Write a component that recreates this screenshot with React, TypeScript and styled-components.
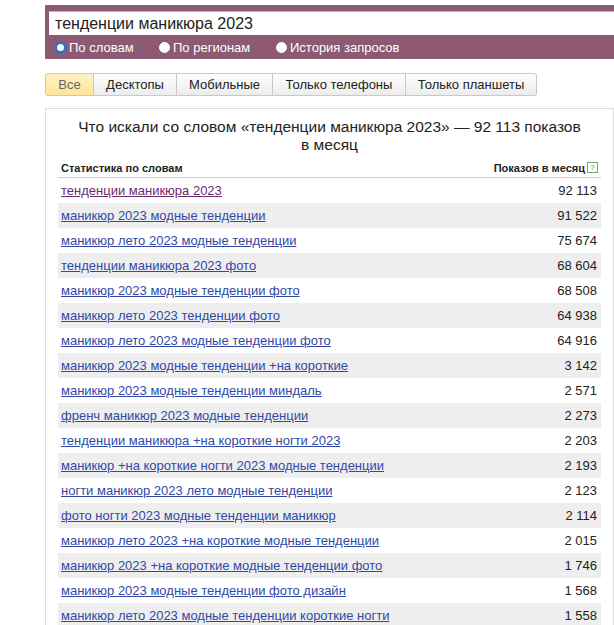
import React from "react";
import styled, { createGlobalStyle } from "styled-components";

const Global = createGlobalStyle`
  html, body { margin: 0; padding: 0; background: #fff; }
  body { font-family: "Liberation Sans", Arial, sans-serif; overflow: hidden; }
`;

const Page = styled.div`
  padding: 5px 0 0 45px;
  width: 569px;
`;

const SearchBox = styled.div`
  background: #8c5a72;
  padding: 6px 0 0 4px;
`;

const Input = styled.div`
  background: #fff;
  height: 24px;
  display: flex;
  align-items: center;
  padding-left: 6px;
  font-size: 16px;
  color: #222;
  border-top: 1px solid #c9a9b8;
  box-sizing: border-box;
`;

const RadioRow = styled.div`
  height: 24px;
  display: flex;
  align-items: center;
  padding-left: 6px;
`;

const RadioItem = styled.label<{ $w: number }>`
  display: flex;
  align-items: center;
  width: ${(p) => p.$w}px;
  color: #fff;
  font-size: 13px;
  gap: 3px;
`;

const RadioDot = styled.span<{ $on?: boolean }>`
  width: 11px;
  height: 11px;
  border-radius: 50%;
  box-sizing: border-box;
  background: #fff;
  border: ${(p) => (p.$on ? "2px solid #1a73e8" : "1px solid #fff")};
`;

const Tabs = styled.div`
  display: flex;
  margin-top: 14px;
  height: 23px;
`;

const Tab = styled.div<{ $active?: boolean; $w: number }>`
  width: ${(p) => p.$w}px;
  box-sizing: border-box;
  display: flex;
  align-items: center;
  justify-content: center;
  font-size: 13px;
  color: ${(p) => (p.$active ? "#666" : "#222")};
  border: 1px solid ${(p) => (p.$active ? "#d8c98c" : "#c8c8c8")};
  border-left-width: ${(p) => (p.$active ? 1 : 0)}px;
  background: ${(p) =>
    p.$active
      ? "linear-gradient(#fff3c6, #fbe39a)"
      : "linear-gradient(#ffffff, #ececec)"};
  border-radius: ${(p) => (p.$active ? "3px 0 0 3px" : "0")};
  &:last-child { border-radius: 0 3px 3px 0; }
`;

const Panel = styled.div`
  margin-top: 12px;
  border: 1px solid #dedede;
  border-bottom: none;
  padding: 9px 12px 0 12px;
  height: 600px;
`;

const Title = styled.div`
  text-align: center;
  font-size: 15.5px;
  line-height: 18px;
  color: #222;
  padding: 0 4px;
`;

const Table = styled.div`
  margin-top: 4px;
`;

const HeadRow = styled.div`
  display: flex;
  justify-content: space-between;
  align-items: center;
  height: 19px;
  padding: 0 3px 0 3px;
  border-bottom: 1px solid #d0d0d0;
  font-size: 11px;
  font-weight: bold;
  color: #222;
`;

const HeadRight = styled.span`
  display: flex;
  align-items: center;
  gap: 2px;
`;

const Help = styled.span`
  width: 9px;
  height: 9px;
  border: 1px solid #7aa36f;
  font-size: 8px;
  line-height: 9px;
  text-align: center;
  color: #777;
  font-weight: normal;
`;

const Row = styled.div<{ $alt: boolean }>`
  display: flex;
  justify-content: space-between;
  align-items: center;
  height: 25px;
  padding: 0 4px 0 3px;
  background: ${(p) => (p.$alt ? "#eeeeee" : "#fff")};
  font-size: 13px;
`;

const Link = styled.a<{ $visited?: boolean }>`
  color: ${(p) => (p.$visited ? "#6c2a6e" : "#3049a8")};
  text-decoration: underline;
`;

const Count = styled.span`
  color: #222;
`;

const rows: [string, string][] = [
  ["тенденции маникюра 2023", "92 113"],
  ["маникюр 2023 модные тенденции", "91 522"],
  ["маникюр лето 2023 модные тенденции", "75 674"],
  ["тенденции маникюра 2023 фото", "68 604"],
  ["маникюр 2023 модные тенденции фото", "68 508"],
  ["маникюр лето 2023 тенденции фото", "64 938"],
  ["маникюр лето 2023 модные тенденции фото", "64 916"],
  ["маникюр 2023 модные тенденции +на короткие", "3 142"],
  ["маникюр 2023 модные тенденции миндаль", "2 571"],
  ["френч маникюр 2023 модные тенденции", "2 273"],
  ["тенденции маникюра +на короткие ногти 2023", "2 203"],
  ["маникюр +на короткие ногти 2023 модные тенденции", "2 193"],
  ["ногти маникюр 2023 лето модные тенденции", "2 123"],
  ["фото ногти 2023 модные тенденции маникюр", "2 114"],
  ["маникюр лето 2023 +на короткие модные тенденции", "2 015"],
  ["маникюр 2023 +на короткие модные тенденции фото", "1 746"],
  ["маникюр 2023 модные тенденции фото дизайн", "1 568"],
  ["маникюр лето 2023 модные тенденции короткие ногти", "1 558"],
];

const tabs: [string, number][] = [
  ["Все", 49],
  ["Десктопы", 83],
  ["Мобильные", 96],
  ["Только телефоны", 133],
  ["Только планшеты", 131],
];

export default function App() {
  return (
    <>
      <Global />
      <Page>
        <SearchBox>
          <Input>тенденции маникюра 2023</Input>
          <RadioRow>
            <RadioItem $w={104}>
              <RadioDot $on />
              По словам
            </RadioItem>
            <RadioItem $w={117}>
              <RadioDot />
              По регионам
            </RadioItem>
            <RadioItem $w={140}>
              <RadioDot />
              История запросов
            </RadioItem>
          </RadioRow>
        </SearchBox>
        <Tabs>
          {tabs.map(([t, w], i) => (
            <Tab key={t} $w={w} $active={i === 0}>
              {t}
            </Tab>
          ))}
        </Tabs>
        <Panel>
          <Title>
            Что искали со словом «тенденции маникюра 2023» — 92 113 показов
            <br />в месяц
          </Title>
          <Table>
            <HeadRow>
              <span>Статистика по словам</span>
              <HeadRight>
                Показов в месяц
                <Help>?</Help>
              </HeadRight>
            </HeadRow>
            {rows.map(([q, n], i) => (
              <Row key={q} $alt={i % 2 === 1}>
                <Link href="#" $visited={i === 0}>
                  {q}
                </Link>
                <Count>{n}</Count>
              </Row>
            ))}
          </Table>
        </Panel>
      </Page>
    </>
  );
}
